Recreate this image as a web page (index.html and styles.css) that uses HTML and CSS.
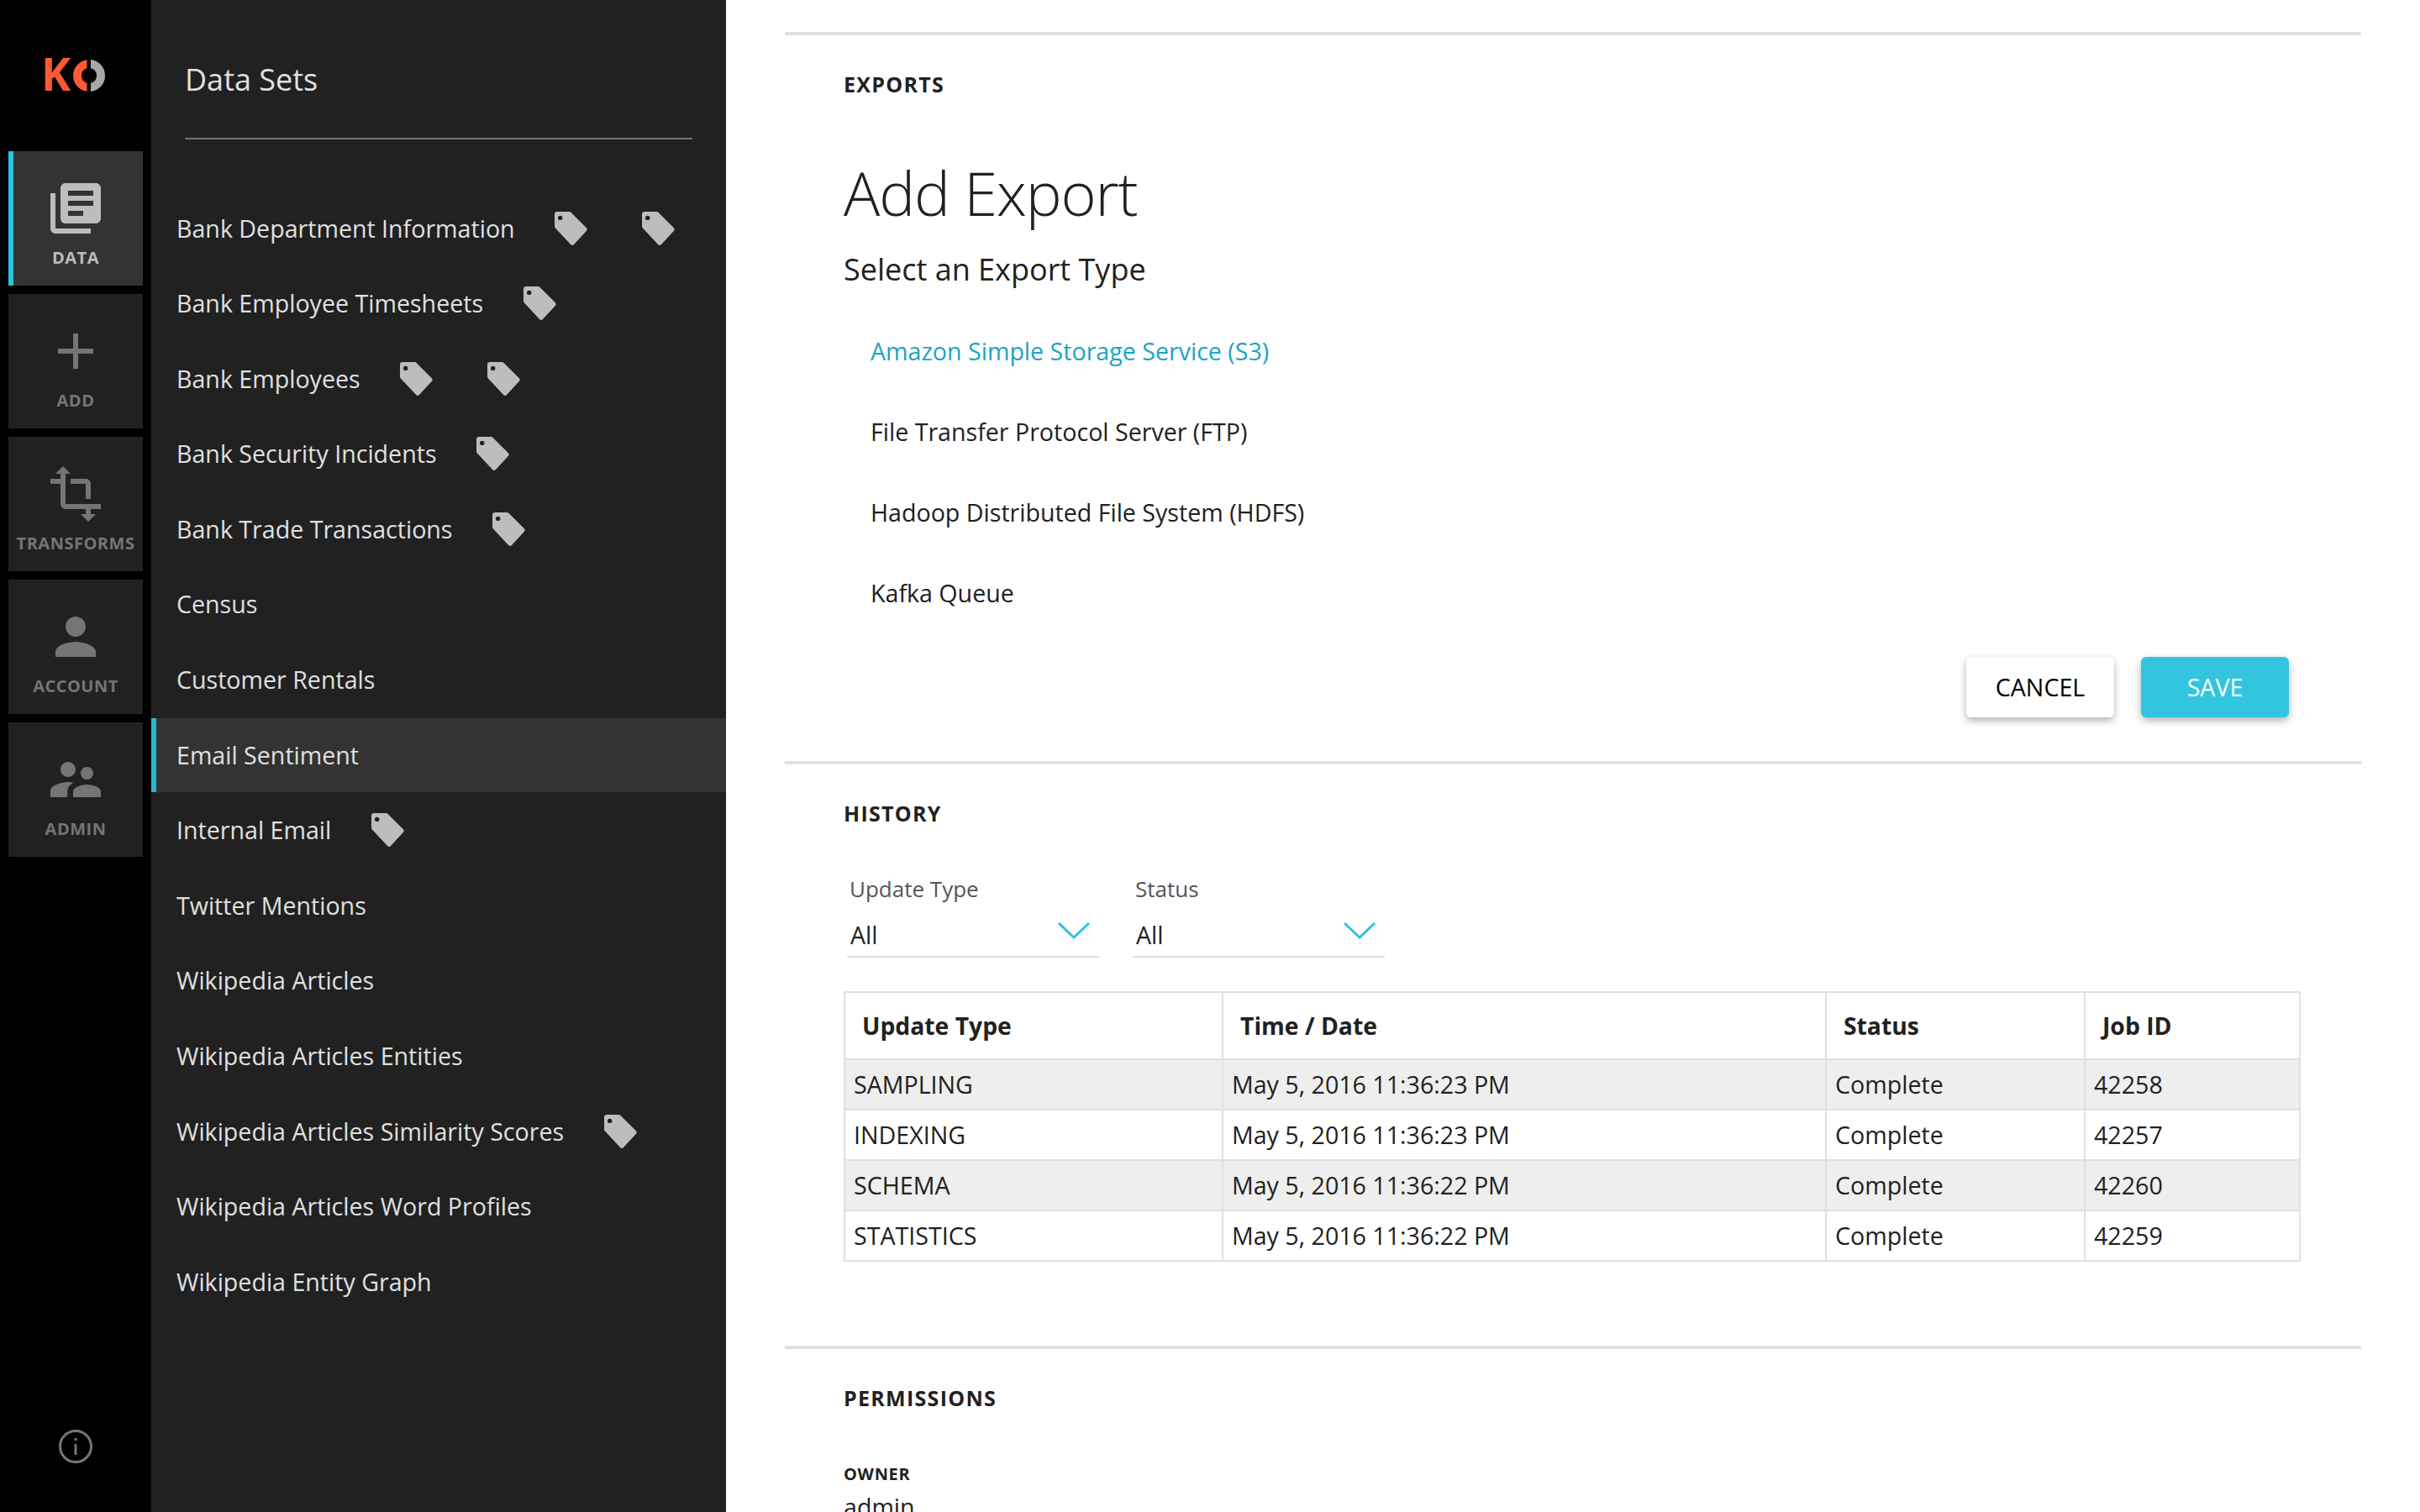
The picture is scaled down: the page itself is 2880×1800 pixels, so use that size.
FILE: index.html
```html
<!DOCTYPE html>
<html lang="en">
<head>
    <meta charset="UTF-8">
    <title>Data Sets</title>
    <link rel="stylesheet" href="styles.css">
</head>
<body>

<nav class="rail">
    <div class="logo">
        <span class="logo_k">K</span>
        <svg class="logo_o" viewBox="0 0 40 40" width="40" height="40">
            <path d="M17.5 1.170A19 19 0 0 0 17.500 38.830V28.650A9 9 0 0 1 17.500 11.350Z" class="arc_red"/>
            <path d="M22 1.100A19 19 0 0 1 22 38.900V28.800A9 9 0 0 0 22 11.200Z" class="arc_grey"/>
        </svg>
    </div>
    <a class="tile active">
        <svg viewBox="0 0 24 24" width="72" height="72"><path d="M4 6H2v14c0 1.1.9 2 2 2h14v-2H4V6zm16-4H8c-1.1 0-2 .9-2 2v12c0 1.1.9 2 2 2h12c1.1 0 2-.9 2-2V4c0-1.1-.9-2-2-2zm-1 9H9V9h10v2zm-4 4H9v-2h6v2zm4-8H9V5h10v2z"/></svg>
        <span>DATA</span>
    </a>
    <a class="tile">
        <svg viewBox="0 0 24 24" width="72" height="72"><path d="M19 13h-6v6h-2v-6H5v-2h6V5h2v6h6v2z"/></svg>
        <span>ADD</span>
    </a>
    <a class="tile">
        <svg viewBox="0 0 24 24" width="72" height="72"><path d="M22 18v-2H8V4h2L7 1 4 4h2v2H2v2h4v8c0 1.1.9 2 2 2h8v2h-2l3 3 3-3h-2v-2h4zM10 8h6v6h2V8c0-1.1-.9-2-2-2h-6v2z"/></svg>
        <span>TRANSFORMS</span>
    </a>
    <a class="tile">
        <svg viewBox="0 0 24 24" width="72" height="72"><path d="M12 12c2.21 0 4-1.79 4-4s-1.79-4-4-4-4 1.79-4 4 1.79 4 4 4zm0 2c-2.67 0-8 1.34-8 4v2h16v-2c0-2.66-5.33-4-8-4z"/></svg>
        <span>ACCOUNT</span>
    </a>
    <a class="tile">
        <svg viewBox="0 0 24 24" width="72" height="72"><path d="M16.5 12c1.38 0 2.49-1.12 2.49-2.5S17.88 7 16.5 7C15.12 7 14 8.12 14 9.5s1.12 2.5 2.5 2.5zM9 11c1.66 0 2.99-1.34 2.99-3S10.66 5 9 5C7.34 5 6 6.34 6 8s1.34 3 3 3zm7.5 3c-1.83 0-5.5.92-5.5 2.75V19h11v-2.25c0-1.83-3.67-2.75-5.5-2.75zM9 13c-2.33 0-7 1.17-7 3.5V19h6.75v-2.25c0-.85.33-2.34 2.37-3.47C10.25 13.1 9.51 13 9 13z"/></svg>
        <span>ADMIN</span>
    </a>
    <svg class="info" viewBox="0 0 40 40" width="40" height="40">
        <circle cx="20" cy="20" r="18.5"/>
        <path d="M20 17v13M20 10v3"/>
    </svg>
</nav>

<aside class="sidebar">
    <h2 class="sidebar_title">Data Sets</h2>
    <ul class="sets">
        <li>Bank Department Information <svg class="tag"><use href="#tag"/></svg><svg class="tag"><use href="#tag"/></svg></li>
        <li>Bank Employee Timesheets <svg class="tag"><use href="#tag"/></svg></li>
        <li>Bank Employees <svg class="tag"><use href="#tag"/></svg><svg class="tag"><use href="#tag"/></svg></li>
        <li>Bank Security Incidents <svg class="tag"><use href="#tag"/></svg></li>
        <li>Bank Trade Transactions <svg class="tag"><use href="#tag"/></svg></li>
        <li>Census</li>
        <li>Customer Rentals</li>
        <li class="selected">Email Sentiment</li>
        <li>Internal Email <svg class="tag"><use href="#tag"/></svg></li>
        <li>Twitter Mentions</li>
        <li>Wikipedia Articles</li>
        <li>Wikipedia Articles Entities</li>
        <li>Wikipedia Articles Similarity Scores <svg class="tag"><use href="#tag"/></svg></li>
        <li>Wikipedia Articles Word Profiles</li>
        <li>Wikipedia Entity Graph</li>
    </ul>
</aside>

<main class="content">
    <section class="exports">
        <h4 class="section_title">EXPORTS</h4>
        <h1 class="page_title">Add Export</h1>
        <h3 class="sub_title">Select an Export Type</h3>
        <ul class="types">
            <li class="picked">Amazon Simple Storage Service (S3)</li>
            <li>File Transfer Protocol Server (FTP)</li>
            <li>Hadoop Distributed File System (HDFS)</li>
            <li>Kafka Queue</li>
        </ul>
        <div class="actions">
            <button class="btn">CANCEL</button>
            <button class="btn save">SAVE</button>
        </div>
    </section>

    <section class="history">
        <h4 class="section_title">HISTORY</h4>
        <div class="filters">
            <div class="filter">
                <label>Update Type</label>
                <div class="select">All
                    <svg class="chevron" viewBox="0 0 38 20" width="38" height="20"><path d="M1 1l18 17L37 1"/></svg>
                </div>
            </div>
            <div class="filter">
                <label>Status</label>
                <div class="select">All
                    <svg class="chevron" viewBox="0 0 38 20" width="38" height="20"><path d="M1 1l18 17L37 1"/></svg>
                </div>
            </div>
        </div>
        <table class="jobs">
            <tr>
                <th class="col_type">Update Type</th>
                <th class="col_time">Time / Date</th>
                <th class="col_status">Status</th>
                <th class="col_id">Job ID</th>
            </tr>
            <tr>
                <td>SAMPLING</td>
                <td>May 5, 2016 11:36:23 PM</td>
                <td>Complete</td>
                <td>42258</td>
            </tr>
            <tr>
                <td>INDEXING</td>
                <td>May 5, 2016 11:36:23 PM</td>
                <td>Complete</td>
                <td>42257</td>
            </tr>
            <tr>
                <td>SCHEMA</td>
                <td>May 5, 2016 11:36:22 PM</td>
                <td>Complete</td>
                <td>42260</td>
            </tr>
            <tr>
                <td>STATISTICS</td>
                <td>May 5, 2016 11:36:22 PM</td>
                <td>Complete</td>
                <td>42259</td>
            </tr>
        </table>
    </section>

    <section class="permissions">
        <h4 class="section_title">PERMISSIONS</h4>
        <h5 class="owner_label">OWNER</h5>
        <p class="owner">admin</p>
    </section>
</main>

<svg class="defs" width="0" height="0">
    <symbol id="tag" viewBox="0 0 40 40">
        <path fill-rule="evenodd" d="M4 0h14.5c.8 0 1.5.3 2 .9l18.4 18.4c.9 1 1 2.500.1 3.500L24 39c-1 1.200-2.800 1.300-3.900.1L1.900 19.500C1.300 18.900 1 18 1 17.200V3c0-1.700 1.300-3 3-3zM7.700 4.700a2.700 2.700 0 1 0 0 5.400 2.700 2.700 0 0 0 0-5.400z"/>
    </symbol>
</svg>

</body>
</html>
```

FILE: styles.css
```css
* {
    box-sizing: border-box;
}

html, body {
    margin: 0;
    height: 100%;
    overflow: hidden;
}

body {
    display: flex;
    background-color: #fff;
    font-family: "Open Sans", "Liberation Sans", sans-serif;
    font-size: 28.6px;
    color: #212121;
}

ul {
    list-style: none;
    margin: 0;
    padding: 0;
}

h1, h2, h3, h4, h5, p {
    margin: 0;
}

.defs {
    position: absolute;
}

/* left rail */
.rail {
    flex: 0 0 180px;
    height: 1800px;
    background-color: #000;
    padding: 0 10px;
    display: flex;
    flex-direction: column;
    gap: 10px;
}

.logo {
    height: 170px;
    display: flex;
    padding: 52px 0 0 39px;
    line-height: 72px;
}

.logo_k {
    flex: 0 0 37px;
    font-size: 53px;
    font-weight: 700;
    color: #ff5a36;
    height: 72px;
}

.logo_o {
    margin-top: 18px;
}

.arc_red {
    fill: #ff5a36;
}

.arc_grey {
    fill: #a7a9ac;
}

.tile {
    height: 160px;
    background-color: #212121;
    color: #757575;
    fill: #757575;
    padding-top: 32px;
    display: flex;
    flex-direction: column;
    align-items: center;
    font-size: 20px;
    font-weight: 700;
    letter-spacing: 0.5px;
    line-height: 28px;
}

.tile span {
    margin-top: 9px;
}

.tile.active {
    background-color: #333;
    color: #bdbdbd;
    fill: #bdbdbd;
    border-left: 6px solid #29c4e0;
    padding-right: 6px;
}

.info {
    margin: 672px 0 0 60px;
    fill: none;
    stroke: #757575;
    stroke-width: 3;
}

/* data sets list */
.sidebar {
    flex: 0 0 684px;
    height: 1800px;
    background-color: #212121;
    color: #e0e0e0;
}

.sidebar_title {
    margin: 0 40px;
    height: 166px;
    padding-top: 70px;
    border-bottom: 2px solid #757575;
    font-size: 36px;
    font-weight: 400;
    line-height: 50px;
}

.sets {
    margin-top: 62px;
}

.sets li {
    height: 88px;
    margin-bottom: 1.6px;
    padding: 0 0 1px 30px;
    display: flex;
    align-items: center;
    line-height: 40px;
    white-space: pre;
}

.sets .selected {
    background-color: #333;
    border-left: 6px solid #29b6d0;
    padding-left: 24px;
}

.tag {
    width: 40px;
    height: 40px;
    fill: #bdbdbd;
    margin-left: 39px;
}

.tag + .tag {
    margin-left: 64px;
}

/* right side */
.content {
    flex: 1;
    padding: 38px 70px 0;
}

.content section {
    border-top: 4px solid #e0e0e0;
    padding-left: 70px;
}

.section_title {
    font-size: 25px;
    font-weight: 700;
    letter-spacing: 1.3px;
    line-height: 34px;
}

.exports {
    height: 868px;
    padding-top: 41px;
    padding-right: 86px;
}

.page_title {
    margin-top: 67px;
    font-size: 72px;
    font-weight: 300;
    letter-spacing: -1.1px;
    line-height: 90px;
}

.sub_title {
    margin-top: 22px;
    font-size: 36px;
    font-weight: 400;
    line-height: 50px;
}

.types {
    margin-top: 24px;
    padding-left: 32px;
}

.types li {
    height: 96px;
    line-height: 96px;
}

.types .picked {
    color: #1aa5c3;
}

.actions {
    margin-top: 28px;
    display: flex;
    justify-content: flex-end;
    gap: 32px;
}

.btn {
    width: 176px;
    height: 72px;
    padding: 0 0 2px;
    border: none;
    border-radius: 6px;
    background-color: #fff;
    color: #000;
    font-family: inherit;
    font-size: 28.6px;
    box-shadow: 0 4px 10px rgba(0, 0, 0, 0.3);
}

.btn.save {
    background-color: #33c5df;
    color: #fff;
}

.history {
    height: 696px;
    padding-top: 41px;
    padding-right: 72px;
}

.filters {
    margin-top: 55px;
    display: flex;
    gap: 40px;
    padding-left: 4px;
}

.filter {
    width: 300px;
}

.filter label {
    display: block;
    padding-left: 3px;
    font-size: 26px;
    line-height: 36px;
    color: #555;
}

.select {
    padding: 17px 11px 5px 4px;
    border-bottom: 2px solid #e0e0e0;
    line-height: 40px;
    display: flex;
    justify-content: space-between;
    align-items: flex-start;
}

.chevron {
    margin-top: 5px;
    fill: none;
    stroke: #29c4e0;
    stroke-width: 3;
}

.jobs {
    margin-top: 40px;
    width: 1734px;
    table-layout: fixed;
    border-collapse: collapse;
}

.jobs th, .jobs td {
    border: 2px solid #e0e0e0;
    text-align: left;
}

.jobs th {
    height: 80px;
    padding: 0 20px;
    font-size: 28.3px;
    font-weight: 700;
}

.jobs td {
    height: 60px;
    padding: 0 10px 1px;
}

.jobs tr:nth-child(even) {
    background-color: #eee;
}

.col_type {
    width: 450px;
}

.col_time {
    width: 718px;
}

.col_status {
    width: 308px;
}

.permissions {
    padding-top: 41px;
}

.owner_label {
    margin-top: 60px;
    font-size: 20px;
    font-weight: 700;
    letter-spacing: 0.7px;
    line-height: 28px;
}

.owner {
    margin-top: 5px;
    line-height: 40px;
}
```
